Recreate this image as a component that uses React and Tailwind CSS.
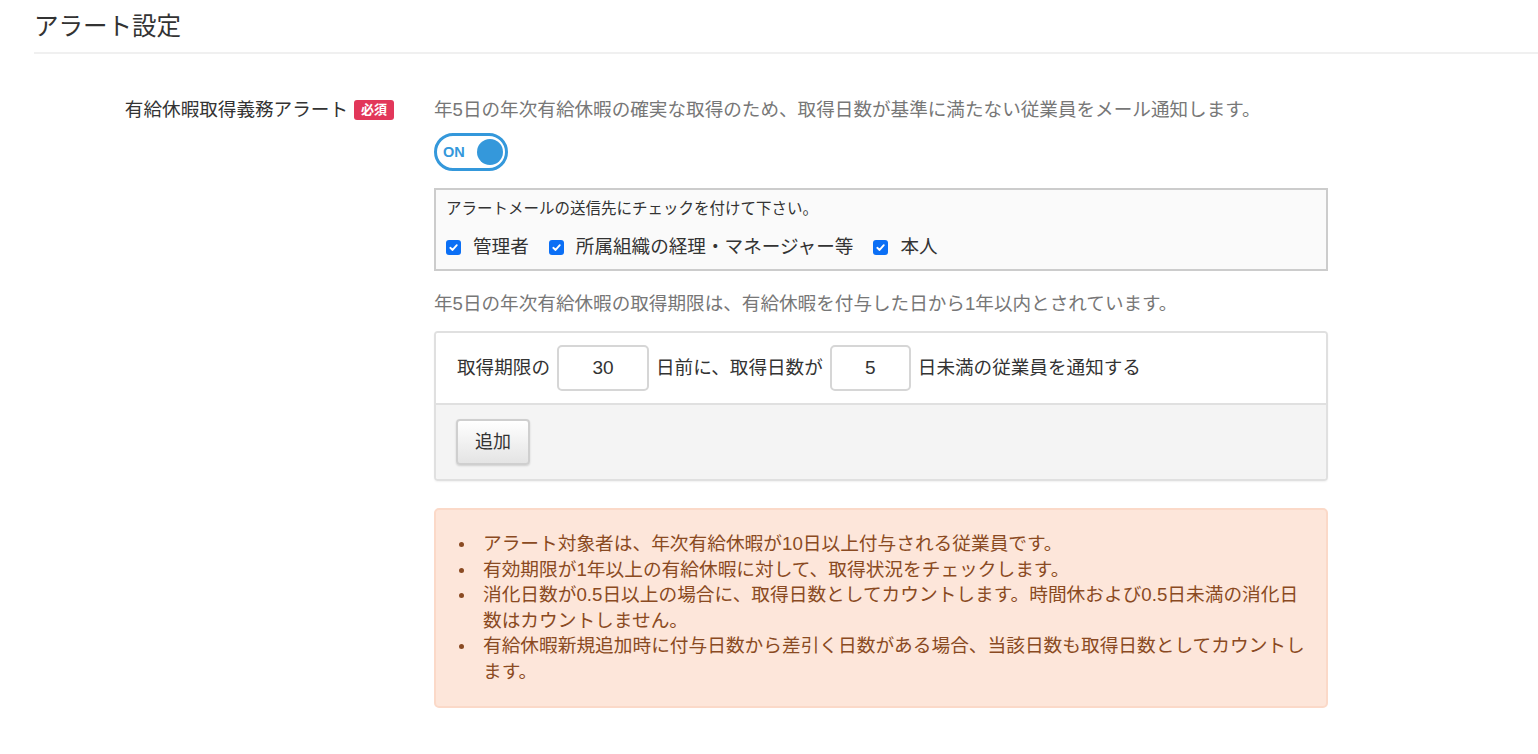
function Check() {
  return (
    <span className="w-[15px] h-[15px] rounded-[3px] bg-[#0b6ff5] flex items-center justify-center shrink-0">
      <svg width="11" height="11" viewBox="0 0 12 12" fill="none">
        <path d="M2.5 6.3 L5 8.7 L9.6 3.4" stroke="#fff" strokeWidth="2" strokeLinecap="round" strokeLinejoin="round" />
      </svg>
    </span>
  );
}

function Bullet({ children }) {
  return (
    <li className="flex">
      <span className="w-[47px] shrink-0 flex justify-start pl-[23px] pt-[11px]">
        <span className="w-[5px] h-[5px] rounded-full bg-[#8a4a22]"></span>
      </span>
      <span className="pr-[13px]">{children}</span>
    </li>
  );
}

export default function App() {
  return (
    <div className="min-h-screen bg-white font-['Liberation_Sans','Noto_Sans_CJK_JP',sans-serif] text-[#333]">
      <div className="pl-[34px]">
        <h2 className="pt-[11px] pb-[9px] text-[24.5px] leading-[32px] text-[#333] border-b-2 border-[#f0f0f0]">
          アラート設定
        </h2>
      </div>

      <div className="flex gap-[40px] mt-[42px]">
        <div className="w-[394px] shrink-0 flex justify-end items-center gap-[6px] h-[28px]">
          <span className="text-[18.6px] leading-[28px] text-[#333]">有給休暇取得義務アラート</span>
          <span className="h-[20px] px-[7px] rounded-[3px] bg-[#e2375a] text-white text-[13px] font-bold leading-[20px]">
            必須
          </span>
        </div>

        <div className="w-[894px] flex flex-col">
          <p className="text-[18.6px] leading-[28px] text-[#777]">
            年5日の年次有給休暇の確実な取得のため、取得日数が基準に満たない従業員をメール通知します。
          </p>

          <div className="mt-[9px] w-[74px] h-[38px] rounded-full border-[3px] border-[#3498db] flex items-center justify-between pl-[6px] pr-[2px]">
            <span className="text-[14.5px] font-bold text-[#3498db] leading-none">ON</span>
            <span className="w-[26px] h-[26px] rounded-full bg-[#3498db]"></span>
          </div>

          <div className="mt-[17px] h-[83px] border-2 border-[#cccccc] bg-[#fafafa] px-[10px] pt-[8px]">
            <p className="text-[15.5px] leading-[22px] text-[#333]">アラートメールの送信先にチェックを付けて下さい。</p>
            <div className="mt-[12px] flex items-center gap-[20px] text-[18.6px] leading-[30px] text-[#333]">
              <label className="flex items-center gap-[12px]">
                <Check />
                管理者
              </label>
              <label className="flex items-center gap-[12px]">
                <Check />
                所属組織の経理・マネージャー等
              </label>
              <label className="flex items-center gap-[12px]">
                <Check />
                本人
              </label>
            </div>
          </div>

          <p className="mt-[19px] text-[18.6px] leading-[28px] text-[#777]">
            年5日の年次有給休暇の取得期限は、有給休暇を付与した日から1年以内とされています。
          </p>

          <div className="mt-[13px] h-[150px] rounded-[4px] border-2 border-[#e0e0e0] shadow-[0_1px_2px_rgba(0,0,0,0.06)] overflow-hidden flex flex-col">
            <div className="h-[72px] bg-white flex items-center pl-[21px] gap-[7px] text-[18.6px] text-[#333] border-b-2 border-[#e0e0e0]">
              <span>取得期限の</span>
              <input
                className="w-[92px] h-[46px] rounded-[5px] border-2 border-[#d6d6d6] text-center text-[19px] text-[#333] outline-none"
                defaultValue="30"
              />
              <span>日前に、取得日数が</span>
              <input
                className="w-[81px] h-[46px] rounded-[5px] border-2 border-[#d6d6d6] text-center text-[19px] text-[#333] outline-none"
                defaultValue="5"
              />
              <span>日未満の従業員を通知する</span>
            </div>
            <div className="flex-1 bg-[#f4f4f4] flex items-center pl-[20px]">
              <button className="w-[74px] h-[46px] rounded-[4px] border-2 border-[#cfcfcf] bg-gradient-to-b from-white to-[#e4e4e4] shadow-[0_1px_2px_rgba(0,0,0,0.15)] text-[18px] text-[#333]">
                追加
              </button>
            </div>
          </div>

          <div className="mt-[27px] rounded-[5px] border-2 border-[#fbd9c8] bg-[#fde6da] pt-[21px] pb-[21px] text-[18.7px] leading-[25.6px] text-[#8a4a22]">
            <ul>
              <Bullet>アラート対象者は、年次有給休暇が10日以上付与される従業員です。</Bullet>
              <Bullet>有効期限が1年以上の有給休暇に対して、取得状況をチェックします。</Bullet>
              <Bullet>消化日数が0.5日以上の場合に、取得日数としてカウントします。時間休および0.5日未満の消化日数はカウントしません。</Bullet>
              <Bullet>有給休暇新規追加時に付与日数から差引く日数がある場合、当該日数も取得日数としてカウントします。</Bullet>
            </ul>
          </div>
        </div>
      </div>
    </div>
  );
}
